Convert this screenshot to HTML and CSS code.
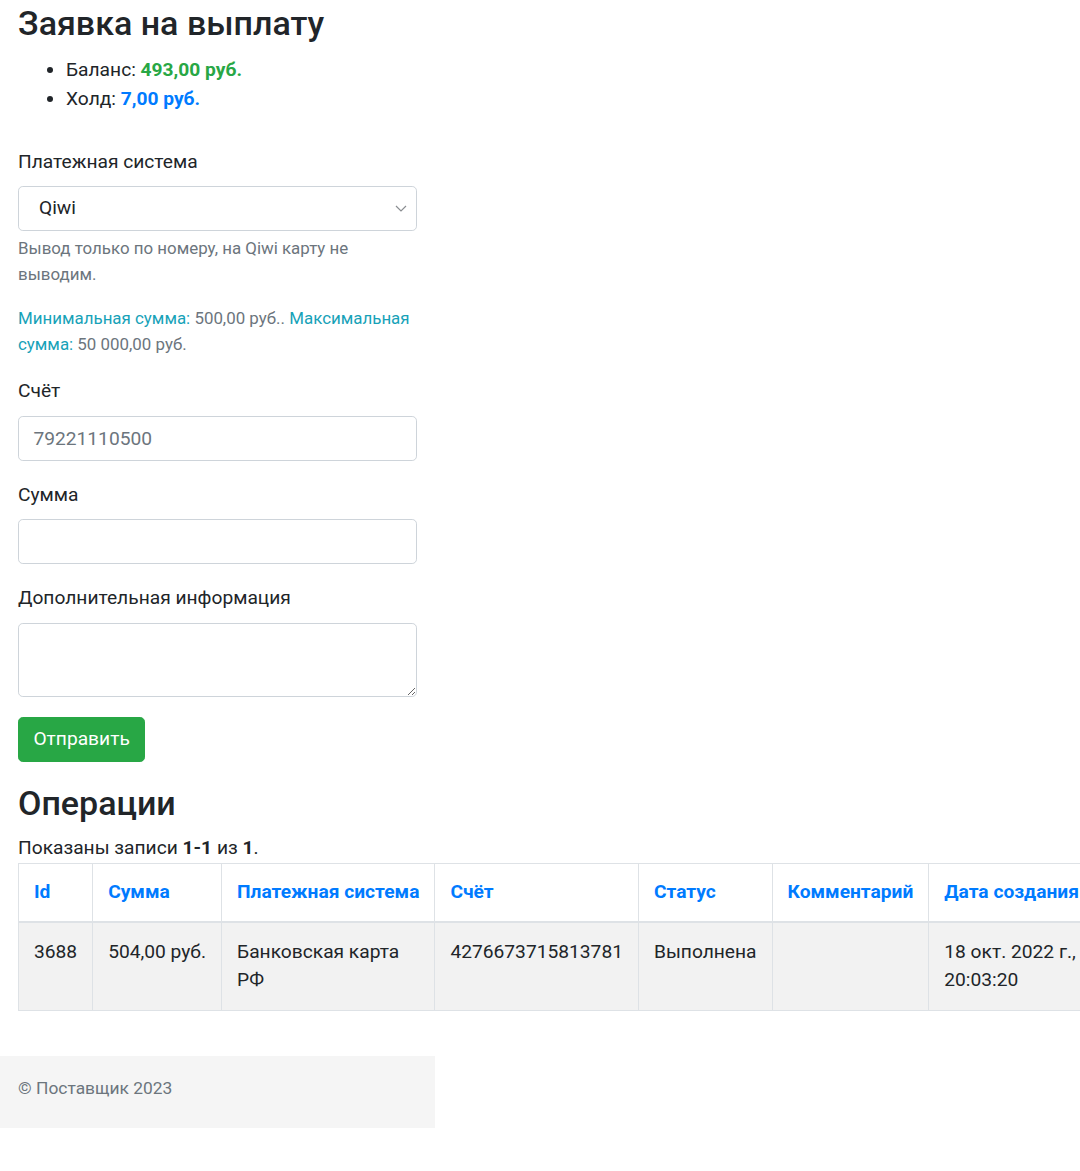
FILE: index.html
```html
<!DOCTYPE html>
<html lang="ru">
<head>
    <meta charset="UTF-8">
    <meta name="viewport" content="width=device-width, initial-scale=1.0">
    <title>Заявка на выплату</title>
    <link rel="stylesheet" href="styles.css">
</head>
<body>
    <div class="wrap">
        <h1>Заявка на выплату</h1>
        <ul class="balance">
            <li>Баланс: <b class="text-success">493,00&nbsp;руб.</b></li>
            <li>Холд: <b class="text-primary">7,00&nbsp;руб.</b></li>
        </ul>

        <form class="payout-form">
            <div class="form-group">
                <label for="system">Платежная система</label>
                <div class="select-box">
                    <select id="system" class="form-control">
                        <option>Qiwi</option>
                        <option>Банковская карта РФ</option>
                    </select>
                    <!-- chevron of the select -->
                    <svg class="select-arrow" width="12" height="7" viewBox="0 0 12 7">
                        <path d="M1 1l5 5 5-5" fill="none" stroke="#8a8d91" stroke-width="1.2"/>
                    </svg>
                </div>
                <div class="form-text">Вывод только по номеру, на Qiwi карту не выводим.</div>
                <div class="form-text limits"><span class="text-info">Минимальная сумма:</span> 500,00&nbsp;руб.. <span class="text-info">Максимальная сумма:</span> 50&nbsp;000,00&nbsp;руб.</div>
            </div>

            <div class="form-group">
                <label for="account">Счёт</label>
                <input id="account" class="form-control" type="text" placeholder="79221110500">
            </div>

            <div class="form-group">
                <label for="amount">Сумма</label>
                <input id="amount" class="form-control" type="text">
            </div>

            <div class="form-group">
                <label for="info">Дополнительная информация</label>
                <textarea id="info" class="form-control" rows="2"></textarea>
            </div>

            <button type="submit" class="btn btn-success">Отправить</button>
        </form>

        <h2>Операции</h2>
        <div class="summary">Показаны записи <b>1-1</b> из <b>1</b>.</div>
        <table class="table">
            <thead>
                <tr>
                    <th><a href="#">Id</a></th>
                    <th><a href="#">Сумма</a></th>
                    <th><a href="#">Платежная система</a></th>
                    <th><a href="#">Счёт</a></th>
                    <th><a href="#">Статус</a></th>
                    <th><a href="#">Комментарий</a></th>
                    <th><a href="#">Дата создания</a></th>
                </tr>
            </thead>
            <tbody>
                <tr>
                    <td>3688</td>
                    <td>504,00&nbsp;руб.</td>
                    <td>Банковская карта РФ</td>
                    <td>4276673715813781</td>
                    <td>Выполнена</td>
                    <td></td>
                    <td>18&nbsp;окт.&nbsp;2022&nbsp;г., 20:03:20</td>
                </tr>
            </tbody>
        </table>
    </div>

    <footer class="footer">
        <p>&copy; Поставщик 2023</p>
    </footer>
</body>
</html>
```

FILE: styles.css
```css
* {
    box-sizing: border-box;
}

body {
    margin: 0;
    font-family: Roboto, "Noto Sans", sans-serif;
    font-size: 19.2px;
    line-height: 1.5;
    color: #212529;
    background: #fff;
}

.wrap {
    width: 435px;
    padding: 3px 18px 0;
}

h1, h2 {
    margin: 0 0 12px;
    font-weight: 500;
    line-height: 1.2;
}

h1 {
    font-size: 34px;
}

h2 {
    font-size: 34px;
    margin-top: 21.5px;
    margin-bottom: 9.6px;
}

.balance {
    margin: 0 0 19.2px;
    padding-left: 48px;
}

.text-success {
    color: #28a745;
}

.text-primary {
    color: #007bff;
}

.text-info {
    color: #17a2b8;
}

.payout-form {
    margin-top: 34.5px;
}

.form-group {
    margin-bottom: 20px;
}

label {
    display: inline-block;
    margin-bottom: 9.6px;
}

.form-control {
    display: block;
    width: 100%;
    height: 45.2px;
    padding: 7.2px 14.4px;
    font-family: inherit;
    font-size: 19.2px;
    line-height: 1.5;
    color: #495057;
    background: #fff;
    border: 1px solid #ced4da;
    border-radius: 4.8px;
}

.form-control::placeholder {
    color: #6c757d;
}

textarea.form-control {
    height: auto;
}

.select-box {
    position: relative;
}

.select-box select {
    appearance: none;
    -webkit-appearance: none;
    padding-left: 20px;
    color: #212529;
}

.select-arrow {
    position: absolute;
    right: 10px;
    top: 19px;
}

.form-text {
    margin-top: 4px;
    font-size: 16.9px;
    line-height: 26px;
    color: #6c757d;
}

.form-text.limits {
    margin-top: 17.8px;
}

.btn {
    display: inline-block;
    padding: 7.2px 14.4px;
    font-family: inherit;
    font-size: 19.2px;
    line-height: 1.5;
    border: 1px solid transparent;
    border-radius: 4.8px;
    cursor: pointer;
}

.btn-success {
    color: #fff;
    background: #28a745;
    border-color: #28a745;
}

.summary b {
    font-weight: 700;
}

.table {
    margin-bottom: 19.2px;
    border-collapse: collapse;
    border: 1px solid #dee2e6;
}

.table th,
.table td {
    padding: 14.4px 15px;
    vertical-align: top;
    text-align: left;
    border: 1px solid #dee2e6;
}

.table th {
    white-space: nowrap;
    border-bottom-width: 2px;
}

.table th a {
    color: #007bff;
    text-decoration: none;
}

.table tbody tr {
    background: #f2f2f2;
}

.footer {
    width: 435px;
    height: 72px;
    margin-top: 45px;
    padding: 19px 18px 0;
    background: #f5f5f5;
    color: #6c757d;
    font-size: 17.4px;
}

.footer p {
    margin: 0;
}
```
